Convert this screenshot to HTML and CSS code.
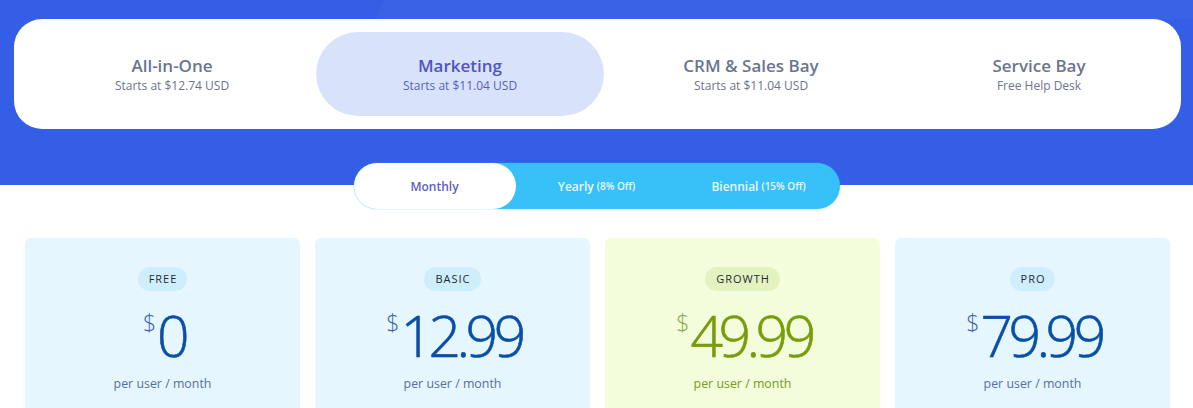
FILE: index.html
```html
<!DOCTYPE html>
<html>
<head>
<meta charset="utf-8">
<link rel="stylesheet" href="styles.css">
</head>
<body>
<header class="hero">
  <nav class="tabs">
    <div class="tab">
      <span class="tab-title">All-in-One</span>
      <span class="tab-sub">Starts at $12.74 USD</span>
    </div>
    <div class="tab active">
      <span class="tab-title">Marketing</span>
      <span class="tab-sub">Starts at $11.04 USD</span>
    </div>
    <div class="tab">
      <span class="tab-title">CRM &amp; Sales Bay</span>
      <span class="tab-sub">Starts at $11.04 USD</span>
    </div>
    <div class="tab">
      <span class="tab-title">Service Bay</span>
      <span class="tab-sub">Free Help Desk</span>
    </div>
  </nav>
</header>
<div class="toggle">
  <div class="opt selected">Monthly</div>
  <div class="opt">Yearly <small>(8% Off)</small></div>
  <div class="opt">Biennial <small>(15% Off)</small></div>
</div>
<section class="plans">
  <div class="plan">
    <span class="badge">FREE</span>
    <div class="price"><span class="cur">$</span><span class="amt">0</span></div>
    <div class="per">per user / month</div>
  </div>
  <div class="plan">
    <span class="badge">BASIC</span>
    <div class="price"><span class="cur">$</span><span class="amt">12.99</span></div>
    <div class="per">per user / month</div>
  </div>
  <div class="plan growth">
    <span class="badge">GROWTH</span>
    <div class="price"><span class="cur">$</span><span class="amt">49.99</span></div>
    <div class="per">per user / month</div>
  </div>
  <div class="plan">
    <span class="badge">PRO</span>
    <div class="price"><span class="cur">$</span><span class="amt">79.99</span></div>
    <div class="per">per user / month</div>
  </div>
</section>
</body>
</html>
```

FILE: styles.css
```css
* { box-sizing: border-box; }
html, body { margin: 0; padding: 0; }
body {
  font-family: "Open Sans", "Noto Sans", sans-serif;
  background: #ffffff;
  width: 1193px;
  height: 408px;
  overflow: hidden;
}
.hero {
  height: 185px;
  padding: 19px 12px 0 14px;
  background-color: #335ee5;
  background-image: linear-gradient(112deg, rgba(255,255,255,0) 0 355px, rgba(255,255,255,0.03) 357px);
  background-size: 100% 19px;
  background-repeat: no-repeat;
}
.tabs {
  background: #ffffff;
  border-radius: 28px;
  padding: 13px 14px;
  display: grid;
  grid-template-columns: 288px 288px 294px 282px;
}
.tab {
  height: 84px;
  border-radius: 42px;
  display: flex;
  flex-direction: column;
  align-items: center;
  justify-content: center;
  color: #6b7590;
}
.tab-title {
  font-size: 17px;
  font-weight: 600;
  line-height: 22px;
}
.tab-sub {
  font-size: 12px;
  line-height: 17px;
  color: #6d7489;
}
.tab.active { background: #d8e3fb; }
.tab.active .tab-title { color: #5054c2; }
.tab.active .tab-sub { color: #5a5fc0; }

.toggle {
  position: relative;
  width: 486px;
  height: 46px;
  margin: -22px auto 0;
  border-radius: 23px;
  background: #38c1f8;
  display: grid;
  grid-template-columns: repeat(3, 162px);
  box-shadow: 0 0 0 1px rgba(56,193,248,0.15);
}
.opt {
  display: flex;
  align-items: center;
  justify-content: center;
  font-size: 12px;
  font-weight: 600;
  color: #e9f7ff;
  gap: 3px;
}
.opt small { font-size: 10px; font-weight: 600; }
.opt.selected {
  background: #ffffff;
  border-radius: 23px;
  color: #5a5fc0;
}

.plans {
  margin-top: 29px;
  padding-left: 25px;
  display: grid;
  grid-template-columns: repeat(4, 275px);
  gap: 15px;
}
.plan {
  height: 200px;
  border-radius: 6px;
  background: #e5f6fe;
  display: flex;
  flex-direction: column;
  align-items: center;
  padding-top: 29px;
}
.badge {
  height: 24px;
  line-height: 24px;
  padding: 0 10px 0 11px;
  border-radius: 12px;
  background: #cfeefb;
  color: #1e2a38;
  font-size: 11px;
  font-weight: 500;
  letter-spacing: 1px;
}
.price {
  display: flex;
  align-items: flex-start;
  margin-top: 16px;
  height: 58px;
  color: #0a4fa6;
}
.cur {
  font-size: 23px;
  font-weight: 300;
  line-height: 26px;
  margin-top: 2px;
  margin-right: 1px;
  color: #3f63a6;
}
.amt {
  font-size: 57px;
  font-weight: 300;
  line-height: 56px;
  letter-spacing: -4.5px;
  margin-right: -3px;
  -webkit-text-stroke: 0.6px currentColor;
}
.per {
  margin-top: 10px;
  font-size: 12.4px;
  color: #5a6e9c;
}
.growth { background: #f3fcdb; }
.growth .badge { background: #e2f3bf; }
.growth .price { color: #789c0a; }
.growth .cur { color: #8ea84a; }
.growth .per { color: #789a1e; }
```
